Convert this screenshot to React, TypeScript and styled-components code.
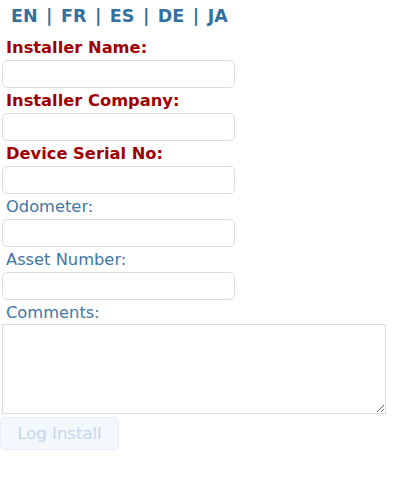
import React from "react";
import styled, { createGlobalStyle } from "styled-components";

const Global = createGlobalStyle`
  html, body { margin: 0; padding: 0; background: #fff; }
  body { font-family: "DejaVu Sans", Verdana, sans-serif; }
`;

const Page = styled.div`
  display: flex;
  flex-direction: column;
  align-items: flex-start;
`;

const LangBar = styled.nav`
  display: flex;
  align-items: center;
  margin: 6px 0 0 11px;
  font-size: 17.5px;
  font-weight: bold;
  line-height: 20px;
  color: #33709f;
`;

const LangLink = styled.a`
  color: inherit;
  text-decoration: none;
`;

const Sep = styled.span`
  margin: 0 8.5px;
`;

const Form = styled.form`
  display: flex;
  flex-direction: column;
  align-items: flex-start;
  margin-top: 12px;
`;

const Label = styled.label<{ $required?: boolean }>`
  display: block;
  margin: 0 0 2px 6px;
  font-size: 16.3px;
  line-height: 20px;
  font-weight: ${(p) => (p.$required ? "bold" : "normal")};
  color: ${(p) => (p.$required ? "#a00000" : "#3f77a6")};
`;

const Input = styled.input`
  box-sizing: border-box;
  width: 233px;
  height: 28px;
  margin: 0 0 3px 2px;
  border: 1px solid #dcdcdc;
  border-radius: 5px;
  background: #fff;
`;

const TextArea = styled.textarea`
  box-sizing: border-box;
  width: 384px;
  height: 90px;
  margin: -1px 0 3px 2px;
  border: 1px solid #dcdcdc;
  border-radius: 0;
  resize: both;
`;

const Button = styled.button`
  box-sizing: border-box;
  width: 119px;
  height: 33px;
  margin: 0;
  padding: 0;
  font-family: "DejaVu Sans", Verdana, sans-serif;
  font-size: 16.5px;
  color: #c3d6e8;
  background: #f3f8fd;
  border: 1px solid #e6eef7;
  border-radius: 5px;
`;

const langs = ["EN", "FR", "ES", "DE", "JA"];

const fields = [
  { label: "Installer Name:", required: true },
  { label: "Installer Company:", required: true },
  { label: "Device Serial No:", required: true },
  { label: "Odometer:", required: false },
  { label: "Asset Number:", required: false },
];

export default function App() {
  return (
    <Page>
      <Global />
      <LangBar>
        {langs.map((l, i) => (
          <React.Fragment key={l}>
            {i > 0 && <Sep>|</Sep>}
            <LangLink href="#">{l}</LangLink>
          </React.Fragment>
        ))}
      </LangBar>
      <Form onSubmit={(e) => e.preventDefault()}>
        {fields.map((f) => (
          <React.Fragment key={f.label}>
            <Label $required={f.required}>{f.label}</Label>
            <Input type="text" />
          </React.Fragment>
        ))}
        <Label>Comments:</Label>
        <TextArea />
        <Button type="submit" disabled>
          Log Install
        </Button>
      </Form>
    </Page>
  );
}
